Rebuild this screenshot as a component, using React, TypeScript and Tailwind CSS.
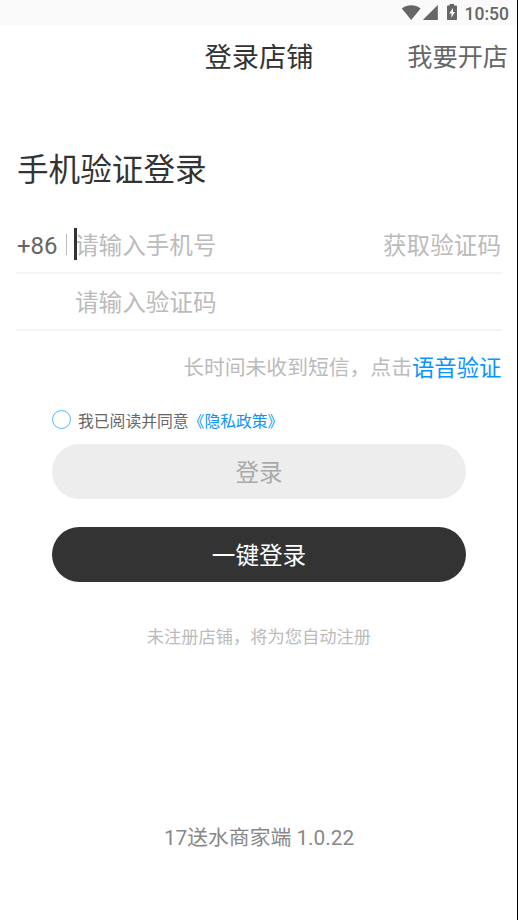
import { useState } from "react";

interface FieldProps {
  placeholder: string;
  value: string;
  onChange: (value: string) => void;
}

const Field = ({ placeholder, value, onChange }: FieldProps) => {
  return (
    <input
      type="tel"
      value={value}
      onChange={(e) => onChange(e.target.value)}
      placeholder={placeholder}
      className="h-full w-[200px] min-w-0 bg-transparent pt-[2px] text-[23.6px] text-[#333333] outline-none placeholder:text-[#bbbbbb]"
    />
  );
};

const StatusBar = () => {
  return (
    <div className="flex h-[25px] items-center justify-end bg-[#fafafa] pr-2 text-[#666666]">
      {/* Wifi, signal, battery */}
      <svg width="62" height="25" viewBox="0 0 62 25" fill="currentColor">
        <path d="M0.8 8.6C6.2 4.2 14.2 4.2 19.6 8.6L10.2 20Z" />
        <path d="M36.8 5V20H21.8Z" />
        <path
          fillRule="evenodd"
          d="M48.5 4H53V5.5H55.2Q56 5.5 56 6.3V19.2Q56 20 55.2 20H46.8Q46 20 46 19.2V6.3Q46 5.5 46.8 5.5H48.5ZM52 8L48.2 13.6H50.4V17.8L54 12H52Z"
        />
      </svg>
      <span className="ml-[2px] pt-[3px] font-[Roboto] text-[17.5px] leading-[22px] font-medium">
        10:50
      </span>
    </div>
  );
};

const App = () => {
  const [phone, setPhone] = useState("");
  const [code, setCode] = useState("");
  const [agreed, setAgreed] = useState(false);

  return (
    <div className="flex h-[920px] w-[518px] flex-col border-r border-black bg-white font-[Roboto,'Noto_Sans_CJK_SC',sans-serif]">
      <StatusBar />

      {/* Header */}
      <header className="grid h-[62px] grid-cols-[1fr_auto_1fr] items-center pt-[3px] pr-[9px] pl-[10px]">
        <span />
        <h1 className="pt-[2px] text-[27.2px] leading-none text-[#333333]">
          登录店铺
        </h1>
        <button className="justify-self-end text-[25.2px] leading-none text-[#666666]">
          我要开店
        </button>
      </header>

      <main className="flex flex-col pr-[15px] pl-4">
        <h2 className="mt-[61px] h-[45px] pl-px text-[31.6px] leading-[45px] text-[#333333]">
          手机验证登录
        </h2>

        {/* Phone */}
        <div className="mt-[24px] flex h-[57px] items-center border-b-2 border-[#f5f5f5]">
          <span className="w-[50px] pt-[2px] pl-px text-[24px] leading-none text-[#666666]">
            +86
          </span>
          <span className="h-[21px] w-px bg-[#bbbbbb]" />
          <div className="relative ml-[8px] h-full">
            <Field placeholder="请输入手机号" value={phone} onChange={setPhone} />
            <span className="absolute top-[11px] -left-px h-[32px] w-[3px] bg-[#333333]" />
          </div>
          <button className="ml-auto pt-[4px] pr-px text-[23.6px] leading-none text-[#bbbbbb]">
            获取验证码
          </button>
        </div>

        {/* Code */}
        <div className="flex h-[57px] items-center border-b-2 border-[#f5f5f5] pl-[59px]">
          <Field placeholder="请输入验证码" value={code} onChange={setCode} />
        </div>

        <p className="mt-[20px] flex h-8 items-center justify-end pt-[2px] pr-[0.5px] text-[20.8px] leading-none whitespace-nowrap text-[#bbbbbb]">
          长时间未收到短信，点击
          <a className="text-[22.4px] text-[#0a94ff]">语音验证</a>
        </p>

        {/* Agreement */}
        <div className="mt-[24px] flex h-[24px] items-center pl-9 text-[15.8px] leading-none text-[#666666]">
          <button
            onClick={() => setAgreed(!agreed)}
            className={`mr-[7px] size-[19px] rounded-full border ${
              agreed ? "border-[#0a94ff] bg-[#0a94ff]" : "border-[#5bb5fc]"
            }`}
          />
          <span className="pt-[5px]">
            我已阅读并同意
            <a className="text-[#0a94ff]">《隐私政策》</a>
          </span>
        </div>

        {/* Buttons */}
        <div className="mt-[13px] flex flex-col gap-7 px-9">
          <button className="h-[55px] rounded-full bg-[#ededed] pt-[4px] text-[23.6px] text-[#aaaaaa]">
            登录
          </button>
          <button className="h-[55px] rounded-full bg-[#333333] pt-[4px] text-[23.6px] text-white">
            一键登录
          </button>
        </div>

        <p className="mt-[42px] text-center text-[17.25px] leading-[26px] text-[#bbbbbb]">
          未注册店铺，将为您自动注册
        </p>
      </main>

      <footer className="mt-auto mb-[66px] pl-px text-center text-[20.8px] leading-[32px] text-[#888888]">
        17送水商家端 1.0.22
      </footer>
    </div>
  );
};

export default App;
